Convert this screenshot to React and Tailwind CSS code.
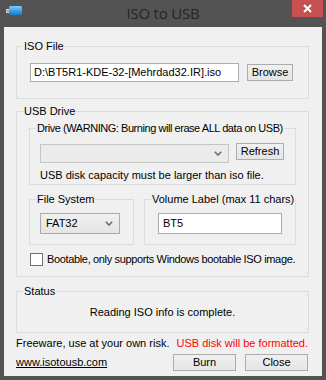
import React from "react";

function Chevron() {
  return (
    <svg width="8" height="5" viewBox="0 0 8 5" className="block">
      <polyline points="0.8,0.8 4,4 7.2,0.8" fill="none" stroke="#6d6d6d" strokeWidth="1.6" />
    </svg>
  );
}

function Group({ label, className = "", legendClass = "", children }) {
  return (
    <fieldset className={`border border-[#dcdcdc] min-w-0 ${className}`}>
      <legend className={`ml-[6px] px-[1px] leading-[13px] whitespace-nowrap ${legendClass}`}>{label}</legend>
      {children}
    </fieldset>
  );
}

function Btn({ children, className = "" }) {
  return (
    <div
      className={`flex items-center justify-center border border-[#acacac] bg-gradient-to-b from-[#f0f0f0] to-[#e5e5e5] leading-[13px] ${className}`}
    >
      {children}
    </div>
  );
}

export default function App() {
  return (
    <div
      className="w-[326px] h-[380px] bg-[#535353] flex flex-col text-[11px] text-black overflow-hidden"
      style={{ fontFamily: '"Liberation Sans", Arial, sans-serif' }}
    >
      {/* title bar */}
      <div className="h-[27px] grid grid-cols-[1fr_auto_1fr] items-start">
        <div className="pt-[6px] pl-[6px]">
          <svg width="16" height="10" viewBox="0 0 16 10" className="block">
            <defs>
              <linearGradient id="usbg" x1="0" y1="0" x2="0" y2="1">
                <stop offset="0" stopColor="#7fd0fa" />
                <stop offset="0.5" stopColor="#3ea4e6" />
                <stop offset="1" stopColor="#1d78c4" />
              </linearGradient>
            </defs>
            <rect x="0" y="3" width="3.5" height="4" fill="#d8d8d8" />
            <rect x="0.5" y="4" width="2.5" height="2" fill="#a8a8a8" />
            <rect x="3" y="0" width="13" height="9" rx="1.5" fill="url(#usbg)" />
          </svg>
        </div>
        <div
          className="pt-[4px] text-[15px] leading-[18px] text-[#262626] tracking-[-0.2px]"
          style={{ fontFamily: '"Open Sans", "Noto Sans", sans-serif' }}
        >
          ISO to USB
        </div>
        <div className="flex justify-end pr-[3px]">
          <div className="w-[31px] h-[17px] bg-[#c75050] flex items-center justify-center">
            <svg width="9" height="9" viewBox="0 0 9 9" className="block">
              <path d="M1 1 L8 8 M8 1 L1 8" stroke="#ffffff" strokeWidth="2" />
            </svg>
          </div>
        </div>
      </div>

      {/* client area */}
      <div className="flex-1 mx-[4px] mb-[4px] bg-[#f0f0f0] pl-[12px] pr-[13px] pt-[13px] flex flex-col">
        {/* ISO File */}
        <Group label="ISO File" className="h-[59px]">
          <div className="flex items-center pl-[13px] pt-[10px]">
            <div className="w-[209px] h-[19px] border border-[#abadb3] bg-white flex items-center pl-[3px] leading-[13px] whitespace-nowrap">
              D:\BT5R1-KDE-32-[Mehrdad32.IR].iso
            </div>
            <Btn className="ml-[8px] w-[46px] h-[17px]">Browse</Btn>
          </div>
        </Group>

        {/* USB Drive */}
        <Group label="USB Drive" className="mt-[6px] h-[172px]">
          <div className="pl-[12px] pt-[4px]">
            <Group
              label="Drive (WARNING: Burning will erase ALL data on USB)"
              legendClass="tracking-[-0.45px]"
              className="w-[267px] h-[63px]"
            >
              <div className="pl-[10px] pt-[8px] flex items-start">
                <div className="mt-[1px] w-[189px] h-[19px] border border-[#c5c5c5] bg-[#ebebeb] flex items-center justify-end pr-[6px]">
                  <Chevron />
                </div>
                <Btn className="ml-[7px] w-[48px] h-[17px]">Refresh</Btn>
              </div>
              <div className="pl-[10px] mt-[6px] leading-[13px] whitespace-nowrap">
                USB disk capacity must be larger than iso file.
              </div>
            </Group>
            <div className="flex mt-[8px]">
              <Group label="File System" className="w-[105px] h-[52px]">
                <div className="pl-[10px] pt-[7px]">
                  <div className="w-[80px] h-[21px] border border-[#acacac] bg-gradient-to-b from-[#f0f0f0] to-[#e5e5e5] flex items-center justify-between pl-[5px] pr-[6px] leading-[13px]">
                    <span>FAT32</span>
                    <Chevron />
                  </div>
                </div>
              </Group>
              <Group label="Volume Label (max 11 chars)" className="ml-[10px] w-[152px] h-[52px]">
                <div className="pl-[13px] pt-[7px]">
                  <div className="w-[124px] h-[21px] border border-[#abadb3] bg-white flex items-center pl-[4px] leading-[13px]">
                    BT5
                  </div>
                </div>
              </Group>
            </div>
            <div className="flex items-center mt-[8px] pl-[1px]">
              <div className="w-[13px] h-[13px] border border-[#707070] bg-white shrink-0" />
              <span className="ml-[4px] leading-[13px] whitespace-nowrap tracking-[-0.35px]">
                Bootable, only supports Windows bootable ISO image.
              </span>
            </div>
          </div>
        </Group>

        {/* Status */}
        <Group label="Status" className="mt-[8px] h-[48px]">
          <div className="text-center pt-[8px] leading-[13px]">Reading ISO info is complete.</div>
        </Group>

        {/* footer */}
        <div className="flex justify-between mt-[4px] leading-[13px] pr-[1px] whitespace-nowrap">
          <span>Freeware, use at your own risk.</span>
          <span className="text-[#ff0000]">USB disk will be formatted.</span>
        </div>
        <div className="flex items-center mt-[4px] pr-[1px]">
          <span className="underline leading-[13px] flex-1">www.isotousb.com</span>
          <Btn className="w-[63px] h-[17px]">Burn</Btn>
          <Btn className="ml-[9px] w-[63px] h-[17px]">Close</Btn>
        </div>
      </div>
    </div>
  );
}
